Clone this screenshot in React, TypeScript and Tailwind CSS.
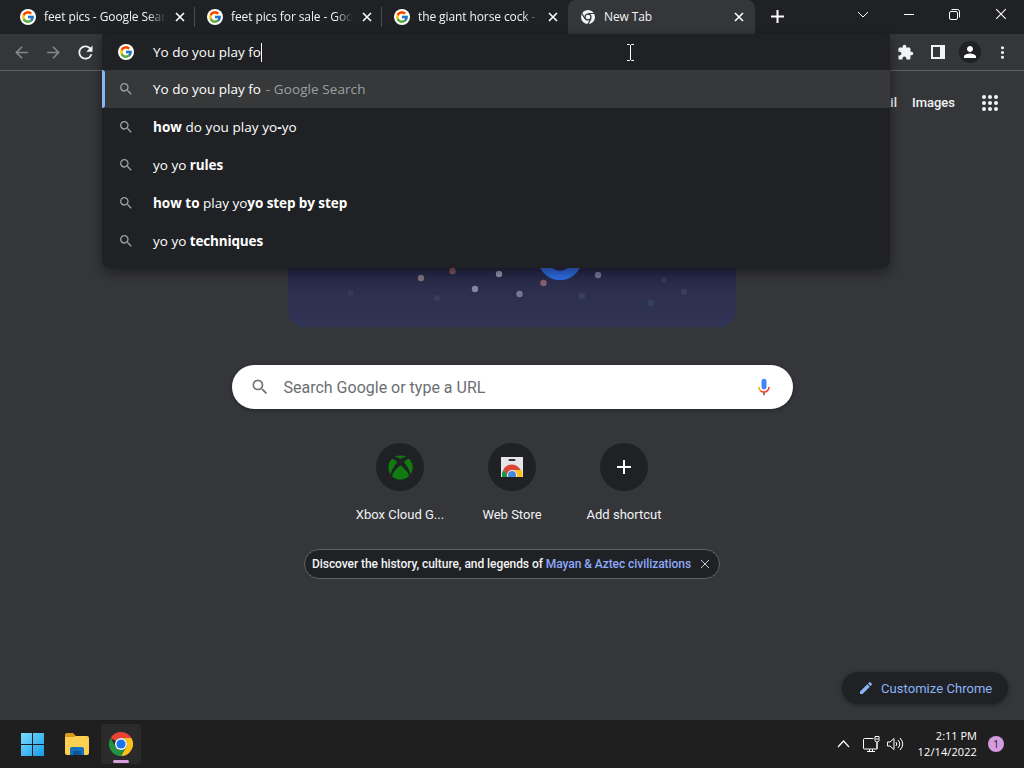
import React from "react";
import { FcGoogle } from "react-icons/fc";
import { FaXbox } from "react-icons/fa";
import {
  MdSearch,
  MdExtension,
  MdPerson,
  MdMoreVert,
  MdRefresh,
  MdArrowBack,
  MdArrowForward,
  MdEdit,
} from "react-icons/md";

function GoogleBadge() {
  return (
    <span className="flex size-4 shrink-0 items-center justify-center rounded-full bg-white">
      <FcGoogle size={14} />
    </span>
  );
}

function Cross({ size, width, className }: { size: number; width: number; className?: string }) {
  return (
    <svg width={size} height={size} viewBox="0 0 10 10" className={className} fill="none" stroke="currentColor" strokeWidth={width}>
      <path d="M1 1l8 8M9 1l-8 8" />
    </svg>
  );
}

function MonoChrome() {
  return (
    <svg width="14" height="14" viewBox="0 0 24 24" className="shrink-0">
      <circle cx="12" cy="12" r="12" fill="#f1f3f4" />
      <circle cx="12" cy="12" r="6.2" fill="#35363a" />
      <path d="M12 6H23M6.8 15L1.3 5.5M17.2 15L11.7 24.5" stroke="#35363a" strokeWidth="2" />
      <circle cx="12" cy="12" r="4" fill="#f1f3f4" />
    </svg>
  );
}

function ColorChrome({ size }: { size: number }) {
  return (
    <svg width={size} height={size} viewBox="0 0 48 48">
      <path d="M3.2 12A24 24 0 0 1 44.8 12H24A12 12 0 0 0 13.6 18Z" fill="#ea4335" />
      <path d="M44.8 12A24 24 0 0 1 24 48L34.4 30A12 12 0 0 0 24 12Z" fill="#fbc116" />
      <path d="M24 48A24 24 0 0 1 3.2 12L13.6 30A12 12 0 0 0 34.4 30Z" fill="#229342" />
      <circle cx="24" cy="24" r="12" fill="#fff" />
      <circle cx="24" cy="24" r="9.2" fill="#1a73e8" />
    </svg>
  );
}

function Tab({ title, divider }: { title: string; divider?: boolean }) {
  return (
    <div className="flex h-[34px] w-[187px] shrink-0 items-center pl-3">
      <GoogleBadge />
      <span className="ml-2 w-[122px] overflow-hidden whitespace-nowrap [mask-image:linear-gradient(to_right,black_104px,transparent_122px)]">
        {title}
      </span>
      <Cross size={10} width={1.6} className={divider ? "ml-[9px] text-white" : "ml-2 text-white"} />
      {divider && <span className="ml-auto h-5 w-px bg-[#4a4c50]" />}
    </div>
  );
}

function Suggestion({ children }: { children: React.ReactNode }) {
  return (
    <li className="flex h-[38px] items-center whitespace-nowrap pl-4">
      <MdSearch size={16} className="text-[#9aa0a6]" />
      <span className="ml-[19px]">{children}</span>
    </li>
  );
}

function Omnibox() {
  return (
    <section className="absolute left-[102px] top-[34px] z-10 h-[234px] w-[788px] rounded-b-lg bg-[#202124] font-['Open_Sans',sans-serif] text-[13.5px] text-white shadow-[0_4px_12px_rgba(0,0,0,0.45)]">
      <div className="flex h-9 items-center pl-4">
        <GoogleBadge />
        <span className="ml-[19px] w-[108px] whitespace-nowrap">Yo do you play fo</span>
        <span className="h-[19px] w-px bg-white" />
        <svg width="9" height="17" viewBox="0 0 9 17" className="ml-[364px]" fill="none" stroke="#fff">
          <path d="M1 .5h2.5l1 1 1-1H8M4.500 1v15M1 16.500h2.500l1-1 1 1H8" />
        </svg>
      </div>
      <ul>
        <li className="flex h-[38px] items-center whitespace-nowrap bg-[#37383a]">
          <span className="h-full w-[3px] rounded-r bg-[#8ab4f8]" />
          <MdSearch size={16} className="ml-[13px] text-[#9aa0a6]" />
          <span className="ml-[19px]">Yo do you play fo</span>
          <span className="ml-[5px] tracking-[0.08px] text-[#9aa0a6]">- Google Search</span>
        </li>
        <Suggestion><span className="tracking-[0.06px]"><b>how</b> do you play yo<b>-</b>yo</span></Suggestion>
        <Suggestion>yo yo <b className="tracking-[-0.1px]">rules</b></Suggestion>
        <Suggestion><b>how to</b> play yo<b className="tracking-[-0.08px]">yo step by step</b></Suggestion>
        <Suggestion>yo yo <b className="tracking-[-0.16px]">techniques</b></Suggestion>
      </ul>
    </section>
  );
}

function TabStrip() {
  return (
    <header className="flex h-[34px] bg-[#202124] pl-2 font-['Open_Sans',sans-serif] text-[12px] tracking-[-0.1px] text-[#f1f3f4]">
      <Tab title="feet pics - Google Sear" divider />
      <Tab title="feet pics for sale - Goog" divider />
      <Tab title="the giant horse cock - G" />
      <div className="-ml-px flex h-[34px] w-[187px] items-center rounded-t-lg bg-[#35363a] pl-[13px]">
        <MonoChrome />
        <span className="ml-[9px] w-[126px]">New Tab</span>
        <Cross size={10} width={1.6} className="ml-1 text-white" />
      </div>
      <svg width="13" height="13" viewBox="0 0 13 13" className="ml-4 mt-2.5" stroke="#fff" strokeWidth="2">
        <path d="M6.500 0v13M0 6.500h13" />
      </svg>
      <div className="ml-auto flex h-7 items-center pr-[17px] text-white">
        <svg width="12" height="7" viewBox="0 0 12 7" fill="none" stroke="currentColor" className="mr-[35px]">
          <path d="M1 1l5 5 5-5" />
        </svg>
        <span className="mr-[35px] h-px w-2.5 bg-white" />
        <svg width="11" height="11" viewBox="0 0 11 11" fill="none" stroke="currentColor" className="mr-[35px]">
          <rect x=".5" y="2.500" width="8" height="8" rx="1.500" />
          <path d="M2.500.5H8.500a2 2 0 0 1 2 2V8.500" />
        </svg>
        <Cross size={12} width={0.9} />
      </div>
    </header>
  );
}

function Toolbar() {
  return (
    <div className="flex h-[37px] items-center border-b border-[#5f6164] bg-[#35363a] pl-[12px] text-[#f1f3f4]">
      <MdArrowBack size={19} className="text-[#85878a]" />
      <MdArrowForward size={19} className="ml-[13px] text-[#85878a]" />
      <MdRefresh size={21} className="ml-[12px]" />
      <MdExtension size={17} className="ml-auto" />
      <svg width="14" height="14" viewBox="0 0 14 14" className="ml-[17px]">
        <path fill="#f1f3f4" fillRule="evenodd" d="M0 0h14v14H0zM2 2v10h7V2z" />
      </svg>
      <span className="ml-[14px] flex size-[22px] items-center justify-center rounded-full bg-[#202124] text-white">
        <MdPerson size={18} />
      </span>
      <MdMoreVert size={19} className="ml-3 mr-[12px]" />
    </div>
  );
}

const sparks: [number, number, string, number][] = [
  [133, 10, "#80717a", 1], [164.500, 3, "#86565c", 1], [211, 6, "#9093ac", 1],
  [187, 21, "#8385a2", 1], [231.500, 26, "#74779a", 1], [255.500, 15, "#855e70", 1],
  [310, 7, "#737694", 1], [294, 28, "#484b6b", 0.5], [363, 35, "#334c65", 0.6],
  [396, 24, "#444661", 0.6], [376, 12, "#40415d", 0.5], [149, 30, "#43456a", 0.5],
  [63, 25, "#3d3d5c", 0.6],
];

function Doodle() {
  return (
    <svg width="448" height="59" viewBox="0 0 448 59" className="mx-auto">
      <defs>
        <linearGradient id="sky" x2="0" y2="1">
          <stop stopColor="#252746" />
          <stop offset=".5" stopColor="#2d304e" />
          <stop offset="1" stopColor="#303354" />
        </linearGradient>
      </defs>
      <path d="M0 0H448V43a16 16 0 0 1-16 16H16A16 16 0 0 1 0 43Z" fill="url(#sky)" />
      <circle cx="272" cy="-9.800" r="17.200" fill="none" stroke="#2e6ae0" strokeWidth="9.500" />
      {sparks.map(([x, y, fill, opacity]) => (
        <circle key={`${x}-${y}`} cx={x} cy={y} r="3.200" fill={fill} opacity={opacity} />
      ))}
    </svg>
  );
}

function Shortcut({ label, children }: { label: string; children: React.ReactNode }) {
  return (
    <div className="flex w-28 flex-col items-center">
      <span className="flex size-12 items-center justify-center rounded-full bg-[#202124]">{children}</span>
      <span className="mt-4 whitespace-nowrap text-[13px] leading-4">{label}</span>
    </div>
  );
}

function NewTabPage() {
  return (
    <main className="relative flex h-[649px] flex-col items-center bg-[#35363a] font-[Roboto,sans-serif] text-[#f1f3f4]">
      <div className="flex h-16 w-full items-center justify-end text-[13px] font-medium">
        <span className="mr-[15px]">Gmail</span>
        <span className="mr-[27px]">Images</span>
        <svg width="16" height="16" viewBox="0 0 16 16" className="mr-[26px]" fill="#f1f3f4">
          {[2, 8, 14].flatMap((y) => [2, 8, 14].map((x) => <circle key={`${x}-${y}`} cx={x} cy={y} r="2" />))}
        </svg>
      </div>
      <div className="mt-[133px]"><Doodle /></div>
      <div className="mt-[38px] flex h-11 w-[561px] items-center rounded-full bg-white pl-[18px] pr-[19px] shadow-[0_1px_4px_rgba(0,0,0,0.35)]">
        <MdSearch size={20} className="text-[#6f7378]" />
        <span className="ml-3.5 pt-0.5 text-[16px] text-[#6b6e73]">Search Google or type a URL</span>
        <svg width="20" height="20" viewBox="0 0 24 24" className="ml-auto">
          <path d="M12 15c1.660 0 3-1.300 3-3V5a3 3 0 0 0-6 0v7c0 1.700 1.340 3 3 3z" fill="#4285f4" />
          <path d="M11 18.900h2V22h-2z" fill="#7a5a50" />
          <path d="M12 17.100c-1.500 0-2.700-.6-3.600-1.500L7 17a6.900 6.900 0 0 0 10 0 7 7 0 0 0 2-5h-2c0 3-2.300 5.100-5 5.100z" fill="#ea4335" />
          <path d="M5 12h2c0 1.500.5 2.700 1.500 3.500l-1.400 1.400C5.800 15.800 5 14 5 12z" fill="#f4b400" />
        </svg>
      </div>
      <div className="mt-[34px] flex">
        <Shortcut label="Xbox Cloud G...">
          <FaXbox size={25} className="text-[#107c10]" />
        </Shortcut>
        <Shortcut label="Web Store">
          <svg width="24" height="24" viewBox="0 0 24 24">
            <defs><clipPath id="bag"><path d="M1 2h22v20H1z" /></clipPath></defs>
            <path d="M1 2h22v20H1z" fill="#e6e6e9" />
            <rect x="8.500" y="4" width="7" height="2" rx="1" fill="#333" />
            <g clipPath="url(#bag)">
              <path d="M3.500 14A10 10 0 0 1 20.700 15H12L7.700 22z" fill="#dc4437" />
              <path d="M12 15h9.200a10 10 0 0 1 1 7H12z" fill="#fbc116" />
              <path d="M3.300 14.800A10 10 0 0 0 2 22h8z" fill="#229342" />
              <circle cx="12" cy="20" r="5" fill="#f1f1f1" />
              <circle cx="12" cy="20" r="4" fill="#4a86df" />
            </g>
          </svg>
        </Shortcut>
        <Shortcut label="Add shortcut">
          <svg width="14" height="14" viewBox="0 0 14 14" stroke="#fff" strokeWidth="2"><path d="M7 0v14M0 7h14" /></svg>
        </Shortcut>
      </div>
      <div className="mt-[26px] flex h-[30px] w-[416px] items-center whitespace-nowrap rounded-full border border-[#5f6368] bg-[#202124] pl-[7px] text-[12px] font-medium tracking-[-0.06px]">
        <span>Discover the history, culture, and legends of <span className="text-[#8ea9fa]">Mayan &amp; Aztec civilizations</span></span>
        <Cross size={10} width={1} className="ml-auto mr-[9px] text-[#c8cacd]" />
      </div>
      <button className="absolute bottom-4 right-4 flex h-8 w-[166px] items-center rounded-full bg-[#202124] pl-4 text-[13px] tracking-[0.05px] text-[#8ab4f8] shadow-[0_1px_5px_rgba(0,0,0,0.4)]">
        <MdEdit size={16} />
        <span className="ml-[7px] whitespace-nowrap pt-px">Customize Chrome</span>
      </button>
    </main>
  );
}

function Taskbar() {
  return (
    <footer className="flex h-12 items-center bg-[#1f1f1f] pl-[21px] font-['Open_Sans',sans-serif] text-white">
      <svg width="23" height="23" viewBox="0 0 23 23">
        <defs>
          <linearGradient id="win" x2="1" y2="1"><stop stopColor="#7bdcfb" /><stop offset="1" stopColor="#169be8" /></linearGradient>
        </defs>
        <path d="M0 0h11v11H0zM12 0h11v11H12zM0 12h11v11H0zM12 12h11v11H12z" fill="url(#win)" />
      </svg>
      <svg width="26" height="22" viewBox="0 0 26 22" className="ml-5">
        <path d="M1 2a2 2 0 0 1 2-2h6l3 3v4H1z" fill="#d99a17" />
        <path d="M1 4h9l2-1h11a2 2 0 0 1 2 2v15a2 2 0 0 1-2 2H3a2 2 0 0 1-2-2z" fill="#fdd051" />
        <path d="M6 22v-6a2 2 0 0 1 2-2h10a2 2 0 0 1 2 2v6z" fill="#1672bd" />
        <path d="M9 18h8v4H9z" fill="#095697" />
      </svg>
      <div className="ml-[11px] flex h-10 w-10 flex-col items-center rounded bg-[#2b2b2b] pt-2">
        <ColorChrome size={24} />
        <span className="mt-[4px] h-[3px] w-4 rounded-full bg-[#d5a0dc]" />
      </div>
      <svg width="13" height="8" viewBox="0 0 13 8" fill="none" stroke="#fff" strokeWidth="1.200" className="ml-auto"><path d="M1 7l5.500-6L12 7" /></svg>
      <svg width="17" height="17" viewBox="0 0 17 17" fill="none" stroke="#fff" className="ml-[13px]">
        <path d="M10.500 2.500h-9a1 1 0 0 0-1 1v8.500a1 1 0 0 0 1 1h12.500V7M4 15.500h8M6.500 13v2.500M9.500 13v2.500M12 .5h4v4l-1 1.500h-2L12 4.500zM14 6v7M12.500 3h3" />
      </svg>
      <svg width="17" height="14" viewBox="0 0 17 14" fill="none" stroke="#fff" className="ml-[7px]">
        <path d="M.5 5v4H3l4 3.500v-11L3 5zM9 5q1.500 2 0 4M11 3q3.500 4 0 8M13 1q5.500 6 0 12" />
      </svg>
      <div className="ml-[13px] flex w-[60px] flex-col text-right text-[11px] leading-4">
        <span>2:11 PM</span>
        <span className="whitespace-nowrap tracking-[0.1px]">12/14/2022</span>
      </div>
      <span className="ml-[11px] mr-5 flex size-4 items-center justify-center rounded-full bg-[#d59be0] text-[10px] text-[#222]">1</span>
    </footer>
  );
}

export default function App() {
  return (
    <div className="relative h-[768px] w-[1024px] overflow-hidden bg-[#35363a]">
      <TabStrip />
      <Toolbar />
      <NewTabPage />
      <Taskbar />
      <Omnibox />
    </div>
  );
}
